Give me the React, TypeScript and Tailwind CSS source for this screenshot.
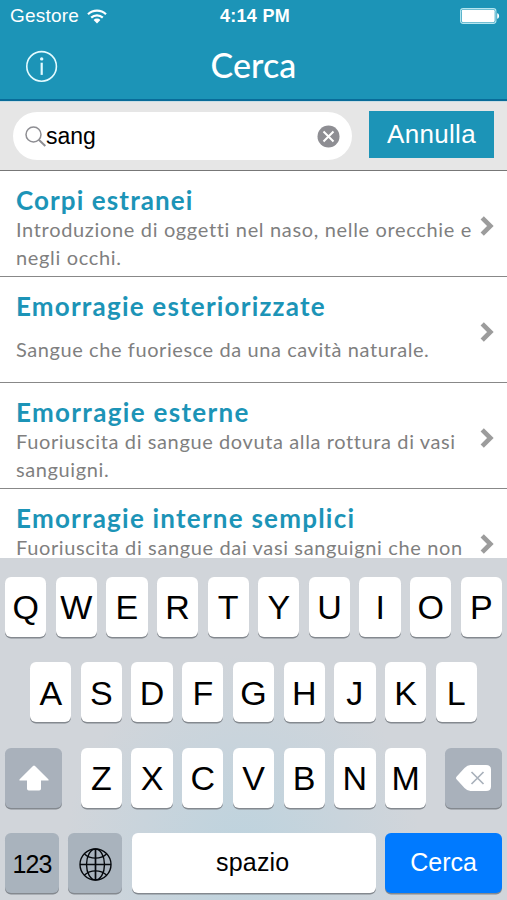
import React from 'react';

interface Result {
  title: string;
  lines: string[];
  titleClass: string;
  lineClass: string;
}

const results: Result[] = [
  {
    title: 'Corpi estranei',
    lines: ['Introduzione di oggetti nel naso, nelle orecchie e', 'negli occhi.'],
    titleClass: 'tracking-[1.1px]',
    lineClass: 'leading-[28px] tracking-[0.66px]',
  },
  {
    title: 'Emorragie esteriorizzate',
    lines: ['Sangue che fuoriesce da una cavità naturale.'],
    titleClass: 'tracking-[1.2px]',
    lineClass: 'leading-[56px] tracking-[0.58px]',
  },
  {
    title: 'Emorragie esterne',
    lines: ['Fuoriuscita di sangue dovuta alla rottura di vasi', 'sanguigni.'],
    titleClass: 'tracking-[1.32px]',
    lineClass: 'leading-[28px] tracking-[0.61px]',
  },
  {
    title: 'Emorragie interne semplici',
    lines: ['Fuoriuscita di sangue dai vasi sanguigni che non'],
    titleClass: 'tracking-[1.22px]',
    lineClass: 'leading-[28px] tracking-[0.63px]',
  },
];

const WifiIcon = () => (
  <svg className="h-[15px] w-5" viewBox="0 0 20 15" fill="none" stroke="#fff" strokeWidth="2.2">
    <path d="M1 5.2a13 13 0 0 1 18 0" />
    <path d="M4.2 8.6a8.4 8.4 0 0 1 11.6 0" />
    <path d="M10 14.4 6.6 11a4.8 4.8 0 0 1 6.8 0z" fill="#fff" stroke="none" />
  </svg>
);

const BatteryIcon = () => (
  <svg className="h-4 w-10" viewBox="0 0 40 16">
    <rect x="0.6" y="0.6" width="35.3" height="14.8" rx="2.6" fill="none" stroke="#b5e6f0" strokeWidth="1.1" />
    <rect x="1.8" y="1.8" width="32.9" height="12.4" rx="1.4" fill="#fff" />
    <path d="M37.2 5.2c1.3.3 1.9 1.4 1.9 2.8s-.6 2.5-1.9 2.8z" fill="#fff" />
  </svg>
);

const InfoIcon = () => (
  <svg className="size-8" viewBox="0 0 32 32">
    <circle cx="15.6" cy="16.4" r="14.8" fill="none" stroke="#e4fbff" strokeWidth="1.6" />
    <circle cx="15.7" cy="8.9" r="1.7" fill="#e4fbff" />
    <path d="M15.7 12.7v12.2" stroke="#e4fbff" strokeWidth="2.2" />
  </svg>
);

const Chevron = () => (
  <svg className="mt-[4px] h-5 w-[14px] shrink-0" viewBox="0 0 14 20" fill="none" stroke="#9c9c9c" strokeWidth="4.6">
    <path d="m2.2 1.8 8.2 8.2-8.2 8.2" />
  </svg>
);

const ShiftIcon = () => (
  <svg className="h-[26px] w-[30px]" viewBox="0 0 30 26" fill="#fff">
    <path d="M14 .9q1-.9 2 0l13.3 13.3q1 1.300-.5 1.400H22v8.200q0 1.800-1.800 1.800H9.800Q8 25.600 8 23.800v-8.200H1.200q-1.500-.1-.5-1.400z" />
  </svg>
);

const DeleteIcon = () => (
  <svg className="h-[26px] w-[35px]" viewBox="0 0 35 26">
    <path
      d="M.5 11.7 8.5 3.1Q11.5 0 14.5 0H30Q35 0 35 4.5v17q0 4.5-5 4.5H14.5q-3 0-6-3.1L.5 14.3q-1-1.3 0-2.6z"
      fill="#fff"
    />
    <path d="m15.5 7 12 12m0-12-12 12" stroke="#a9b1bb" strokeWidth="1.7" />
  </svg>
);

const GlobeIcon = () => (
  <svg className="size-[33px]" viewBox="0 0 33 33" fill="none" stroke="#05080c" strokeWidth="1.4">
    <circle cx="16.5" cy="16.5" r="15.5" />
    <ellipse cx="16.5" cy="16.5" rx="9" ry="15.5" />
    <path d="M16.5 1v31M1 16.5h31" strokeWidth="1.7" />
    <path d="M5.5 6c6 5.500 16 5.500 22 0M5.500 27c6-5.500 16-5.500 22 0" />
  </svg>
);

const keyBase = 'flex h-[60px] items-center justify-center rounded-[6px] shadow-[0_1.5px_0_#84898f]';

const LetterRow: React.FC<{ letters: string }> = ({ letters }) => (
  <div className="flex gap-[9.4px]">
    {letters.split('').map((letter) => (
      <div key={letter} className={`${keyBase} w-[41.3px] bg-white pt-[2px] text-[34px] text-black`}>
        {letter}
      </div>
    ))}
  </div>
);

const Keyboard = () => (
  <div className="flex h-[342px] flex-col gap-[25.5px] bg-[#d1d5da] bg-[radial-gradient(ellipse_at_48%_88%,#bdd3de_0%,#c9d4dc_28%,#d1d5da_48%)] px-[5px] pt-[18.8px]">
    <LetterRow letters="QWERTYUIOP" />
    <div className="flex justify-center">
      <LetterRow letters="ASDFGHJKL" />
    </div>
    <div className="flex justify-between">
      <div className={`${keyBase} w-[57px] bg-[#a9b1bb]`}>
        <ShiftIcon />
      </div>
      <LetterRow letters="ZXCVBNM" />
      <div className={`${keyBase} w-[57px] bg-[#a9b1bb]`}>
        <DeleteIcon />
      </div>
    </div>
    <div className="flex gap-[9.5px] text-[25px] text-black">
      <div className={`${keyBase} w-[54px] bg-[#a9b3bd] pt-[3px] tracking-[-1px]`}>123</div>
      <div className={`${keyBase} w-[54px] bg-[#a9b3bd] pt-[2px]`}>
        <GlobeIcon />
      </div>
      <div className={`${keyBase} w-[244px] bg-white pr-[2px] pb-[1px] tracking-[0.2px]`}>spazio</div>
      <div className={`${keyBase} w-[117px] bg-[#007aff] pb-[1px] text-white`}>Cerca</div>
    </div>
  </div>
);

const App: React.FC = () => (
  <div className="flex h-[900px] w-[507px] flex-col overflow-hidden bg-white font-['Liberation_Sans',sans-serif]">
    <header className="h-[101px] shrink-0 border-b-2 border-[#096c99] bg-[#1c94b7] text-white">
      <div className="grid h-8 grid-cols-3 items-center pr-[7px] pl-[10px]">
        <div className="flex items-center gap-2 pt-px text-[19px] tracking-[0.2px]">
          Gestore
          <WifiIcon />
        </div>
        <div className="pt-px text-center text-[18px] font-bold tracking-[0.3px]">4:14 PM</div>
        <div className="flex justify-end">
          <BatteryIcon />
        </div>
      </div>
      <div className="grid h-[67px] grid-cols-[1fr_auto_1fr] items-center px-[26px]">
        <InfoIcon />
        <h1 className="pb-[3px] font-['Lato',sans-serif] text-[34px] font-medium tracking-[0.1px]">Cerca</h1>
      </div>
    </header>

    <div className="flex h-[70px] shrink-0 items-center justify-between border-t border-b border-t-[#c9dde4] border-b-[#777] bg-[#e6e6e6] pr-[13px] pl-[13px]">
      <div className="flex h-12 w-[339px] items-center rounded-full bg-white pr-[12px] pl-3">
        <svg className="size-[21px]" viewBox="0 0 21 21" fill="none" stroke="#8e8e93" strokeWidth="1.5">
          <circle cx="8.5" cy="8.5" r="7.5" />
          <path d="m13.8 13.8 6.5 6.2" strokeWidth="2" />
        </svg>
        <span className="flex-1 text-[23px] text-black">sang</span>
        <svg className="size-[23px]" viewBox="0 0 23 23">
          <circle cx="11.5" cy="11.5" r="11" fill="#8e8e93" />
          <path d="m6.5 6.5 10 10m0-10-10 10" stroke="#fff" strokeWidth="2" />
        </svg>
      </div>
      <button className="mb-[3px] h-[47.5px] w-[125px] bg-[#1c94b7] pb-px text-[26px] tracking-[0.3px] text-white">
        Annulla
      </button>
    </div>

    <main className="h-[387px] shrink-0 overflow-hidden font-['Lato',sans-serif]">
      {results.map((item) => (
        <div
          key={item.title}
          className="flex h-[106.1px] items-center justify-between border-b border-[#888] pr-[13px] pl-4"
        >
          <div className="h-full pt-[13px] whitespace-nowrap">
            <h2 className={`-mb-[2px] text-[26px] leading-[33px] font-bold text-[#1c94b7] ${item.titleClass}`}>
              {item.title}
            </h2>
            {item.lines.map((line) => (
              <p key={line} className={`text-[20px] text-[#7f7f7f] ${item.lineClass}`}>
                {line}
              </p>
            ))}
          </div>
          <Chevron />
        </div>
      ))}
    </main>

    <Keyboard />
  </div>
);

export default App;
